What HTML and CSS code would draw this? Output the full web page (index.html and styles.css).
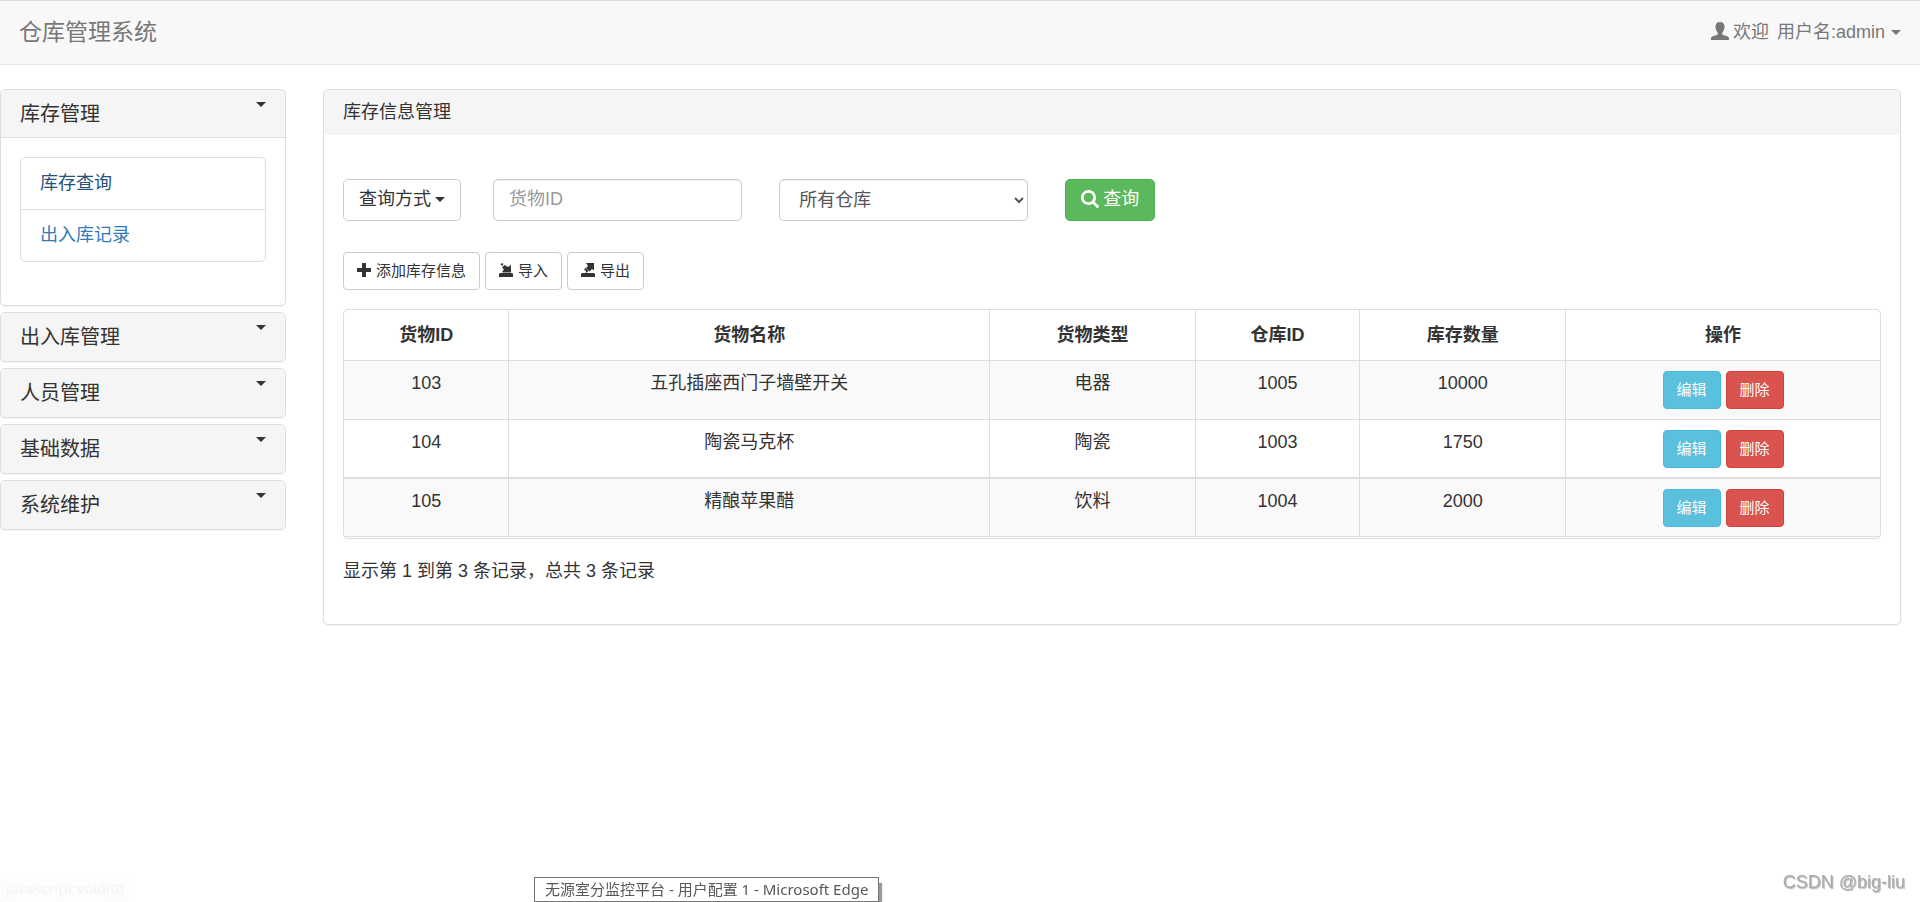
FILE: index.html
```html
<!DOCTYPE html>
<html lang="zh-CN">
<head>
<meta charset="utf-8">
<title>仓库管理系统</title>
<link rel="stylesheet" href="styles.css">
</head>
<body>
<svg class="sprite" aria-hidden="true">
  <symbol id="i-user" viewBox="0 0 18 18"><path d="M9 0c2.900 0 4.500 1.900 4.500 4.700 0 2.400-.8 4.400-2.200 5.700v1.500c0 .6.300.9.900 1.100l3.900 1.300c1.300.5 1.900 1.200 1.900 2.200V18H0v-1.500c0-1 .6-1.700 1.900-2.200L5.800 13c.6-.2.900-.5.900-1.100v-1.500C5.300 9.100 4.500 7.100 4.500 4.700 4.500 1.900 6.100 0 9 0z"/></symbol>
  <symbol id="i-search" viewBox="0 0 18 18"><path fill-rule="evenodd" d="M7.500 0a7.500 7.500 0 0 1 6.200 11.700l4 4c.4.400.4.800 0 1.200l-.8.800c-.4.400-.8.400-1.200 0l-4-4A7.500 7.500 0 1 1 7.500 0zm0 2.700a4.800 4.800 0 1 0 0 9.600 4.800 4.800 0 0 0 0-9.600z"/></symbol>
  <symbol id="i-plus" viewBox="0 0 14 14"><path d="M5.500 0h3q.5 0 .5.500V5h4.500q.5 0 .5.500v3q0 .5-.5.500H9v4.500q0 .5-.5.500h-3q-.5 0-.5-.5V9H.5Q0 9 0 8.500v-3Q0 5 .5 5H5V.5q0-.5.500-.5z"/></symbol>
  <symbol id="i-import" viewBox="0 0 14 14"><path d="M0 11l1-1h12l1 1v3H0zM12 2v7.500H3.500V8L5 6.500 3 4.500 5.500 2 9 4zM1.500 1.500L3 0l1.500 1L3 3z"/></symbol>
  <symbol id="i-export" viewBox="0 0 14 14"><path d="M0 11l1-1h12l1 1v3H0zM5 0h8v7.500L11 6 8.500 8.500 5 5l2-2zM3 6.500L4.500 5 7.500 8 6 9.500H4.500L5 8z"/></symbol>
</svg>

<header class="navbar">
  <a class="brand" href="#">仓库管理系统</a>
  <button class="user-menu" type="button">
    <svg class="icon"><use href="#i-user"/></svg>
    <span>欢迎</span>
    <span class="user-name">用户名:admin</span>
    <span class="caret"></span>
  </button>
</header>

<div class="layout">
  <nav class="sidebar">
    <section class="panel">
      <button class="menu-head menu-open" type="button">库存管理<span class="caret"></span></button>
      <div class="menu-body">
        <ul class="list-group">
          <li><a class="current" href="#">库存查询</a></li>
          <li><a href="#">出入库记录</a></li>
        </ul>
      </div>
    </section>
    <section class="panel"><button class="menu-head" type="button">出入库管理<span class="caret"></span></button></section>
    <section class="panel"><button class="menu-head" type="button">人员管理<span class="caret"></span></button></section>
    <section class="panel"><button class="menu-head" type="button">基础数据<span class="caret"></span></button></section>
    <section class="panel"><button class="menu-head" type="button">系统维护<span class="caret"></span></button></section>
  </nav>

  <main class="panel content">
    <h1 class="content-head">库存信息管理</h1>
    <div class="content-body">
      <form class="search-form">
        <button class="btn query-type" type="button">查询方式<span class="caret"></span></button>
        <input class="field" type="text" placeholder="货物ID" aria-label="货物ID">
        <select class="field" aria-label="仓库"><option>所有仓库</option></select>
        <button class="btn btn-success" type="button"><svg class="icon"><use href="#i-search"/></svg>查询</button>
      </form>
      <div class="actions">
        <button class="btn btn-sm" type="button"><svg class="icon"><use href="#i-plus"/></svg>添加库存信息</button>
        <button class="btn btn-sm" type="button"><svg class="icon"><use href="#i-import"/></svg>导入</button>
        <button class="btn btn-sm" type="button"><svg class="icon"><use href="#i-export"/></svg>导出</button>
      </div>
      <div class="table-box">
        <table>
          <colgroup><col class="c-id"><col class="c-name"><col class="c-type"><col class="c-id"><col class="c-type"><col></colgroup>
          <thead>
            <tr><th>货物ID</th><th>货物名称</th><th>货物类型</th><th>仓库ID</th><th>库存数量</th><th>操作</th></tr>
          </thead>
          <tbody>
            <tr><td>103</td><td>五孔插座西门子墙壁开关</td><td>电器</td><td>1005</td><td>10000</td>
              <td><div class="row-actions"><button class="btn btn-sm btn-info" type="button">编辑</button><button class="btn btn-sm btn-danger" type="button">删除</button></div></td></tr>
            <tr><td>104</td><td>陶瓷马克杯</td><td>陶瓷</td><td>1003</td><td>1750</td>
              <td><div class="row-actions"><button class="btn btn-sm btn-info" type="button">编辑</button><button class="btn btn-sm btn-danger" type="button">删除</button></div></td></tr>
            <tr><td>105</td><td>精酿苹果醋</td><td>饮料</td><td>1004</td><td>2000</td>
              <td><div class="row-actions"><button class="btn btn-sm btn-info" type="button">编辑</button><button class="btn btn-sm btn-danger" type="button">删除</button></div></td></tr>
          </tbody>
        </table>
      </div>
      <p class="summary">显示第 1 到第 3 条记录，总共 3 条记录</p>
    </div>
  </main>
</div>

<div class="link-status">javascript:void(0)</div>
<div class="window-tip">无源室分监控平台 - 用户配置 1 - Microsoft Edge</div>
<div class="watermark">CSDN @big-liu</div>
</body>
</html>
```
FILE: styles.css
```css
* { box-sizing: border-box; }

body {
  margin: 0;
  min-height: 100vh;
  background: #fff;
  color: #333;
  font: 18px/25px "Liberation Sans", "Noto Sans CJK SC", sans-serif;
}

button, input, select { font: inherit; color: inherit; }
button { cursor: pointer; }
a { text-decoration: none; }

.sprite { display: none; }
.icon { width: 18px; height: 18px; fill: currentColor; flex: none; }

.caret {
  display: inline-block;
  border-top: 5px solid;
  border-left: 5px solid transparent;
  border-right: 5px solid transparent;
}

/* Top bar */
.navbar {
  display: flex;
  align-items: center;
  justify-content: space-between;
  height: 65px;
  padding: 0 19px;
  background: #f8f8f8;
  border-top: 1px solid #ddd;
  border-bottom: 1px solid #e7e7e7;
  color: #777;
}
.brand { color: inherit; font-size: 23px; }
.user-menu {
  display: flex;
  align-items: center;
  gap: 4px;
  padding: 0;
  border: 0;
  background: none;
}
.user-menu .icon { margin-bottom: 3px; }
.user-name { margin: 0 2px 0 4px; }

/* Page columns */
.layout {
  display: grid;
  grid-template-columns: 29fr 160fr;
  gap: 37px;
  align-items: start;
  padding: 24px 19px 0 0;
}
.panel {
  background: #fff;
  border: 1px solid #ddd;
  border-radius: 5px;
  box-shadow: 0 1px 1px rgba(0, 0, 0, .05);
}

/* Sidebar */
.sidebar { display: grid; gap: 6px; }
.menu-head {
  display: flex;
  justify-content: space-between;
  width: 100%;
  padding: 12px 19px;
  border: 0;
  border-radius: 4px;
  background: #f5f5f5;
  font-size: 20px;
  line-height: 24px;
  text-align: left;
}
.menu-open {
  padding-bottom: 11px;
  border-bottom: 1px solid #ddd;
  border-radius: 4px 4px 0 0;
}
.menu-body { padding: 19px 19px 43px; }
.list-group {
  margin: 0;
  padding: 0;
  list-style: none;
  border: 1px solid #ddd;
  border-radius: 5px;
}
.list-group li + li { border-top: 1px solid #ddd; }
.list-group a { display: block; padding: 13px 19px; line-height: 25px; color: #337ab7; }
.list-group .current { color: #23527c; }

/* Content panel */
.content-head {
  margin: 0;
  padding: 10px 19px;
  border-radius: 4px;
  background: #f5f5f5;
  font-size: 18px;
  font-weight: inherit;
}
.content-body { padding: 44px 19px 40px; }

.btn {
  display: inline-flex;
  align-items: center;
  gap: 4px;
  height: 42px;
  padding: 0 15px 2px;
  border: 1px solid #ccc;
  border-radius: 5px;
  background: #fff;
  white-space: nowrap;
}
.btn-sm {
  gap: 5px;
  height: 38px;
  padding: 0 13px 2px;
  border-radius: 4px;
  font-size: 15px;
}
.btn-sm .icon { width: 14px; height: 14px; }
.btn-success { background: #5cb85c; border-color: #4cae4c; color: #fff; }
.btn-info { background: #5bc0de; border-color: #46b8da; color: #fff; }
.btn-danger { background: #d9534f; border-color: #d43f3a; color: #fff; }

.search-form { display: flex; margin-bottom: 31px; }
.query-type { margin-right: 32px; }
.field {
  width: 16.2%;
  height: 42px;
  margin-right: 37px;
  padding: 0 15px 1px;
  border: 1px solid #ccc;
  border-radius: 5px;
  background: #fff;
  color: #555;
  box-shadow: inset 0 1px 1px rgba(0, 0, 0, .075);
}
.field::placeholder { color: #999; }

.actions { display: flex; gap: 5px; margin-bottom: 19px; }

.table-box {
  padding-bottom: 1px;
  border: 1px solid #ddd;
  border-radius: 5px;
}
table { width: 100%; table-layout: fixed; border-collapse: separate; border-spacing: 0; }
.c-id { width: 10.7%; }
.c-name { width: 31.3%; }
.c-type { width: 13.4%; }
th, td { border-bottom: 1px solid #ddd; text-align: center; vertical-align: top; }
th + th, td + td { border-left: 1px solid #ddd; }
th { padding: 13px 10px 12px; font-weight: 700; }
td { padding: 10px 10px 9px; }
tbody tr:nth-child(odd) { background: #f9f9f9; }
tbody tr:first-child td { padding-bottom: 10px; }
tbody tr:nth-child(2) td { border-bottom-width: 2px; }
.row-actions { display: flex; justify-content: center; gap: 5px; }

.summary { margin: 20px 0 0; }

/* Overlays along the window's bottom edge */
.link-status {
  position: fixed;
  left: 0;
  bottom: 0;
  padding: 2px 11px 1px 6px;
  background: #fdfdfd;
  color: #f4f4f4;
  font: 15px/25px "Open Sans", sans-serif;
}
.window-tip {
  position: fixed;
  left: 534px;
  bottom: 0;
  padding: 0 10px;
  border: 1px solid #767676;
  background: #fff;
  box-shadow: 3px 6px 1px rgba(0, 0, 0, .4);
  color: #575757;
  font: 15px/23px "Noto Sans", "Noto Sans CJK SC", sans-serif;
}
.watermark {
  position: fixed;
  right: 15px;
  bottom: 7px;
  color: #aaa;
  font: 18px/25px "Liberation Sans", sans-serif;
  text-shadow: 1px 1px 1px rgba(0, 0, 0, .3);
}
```
